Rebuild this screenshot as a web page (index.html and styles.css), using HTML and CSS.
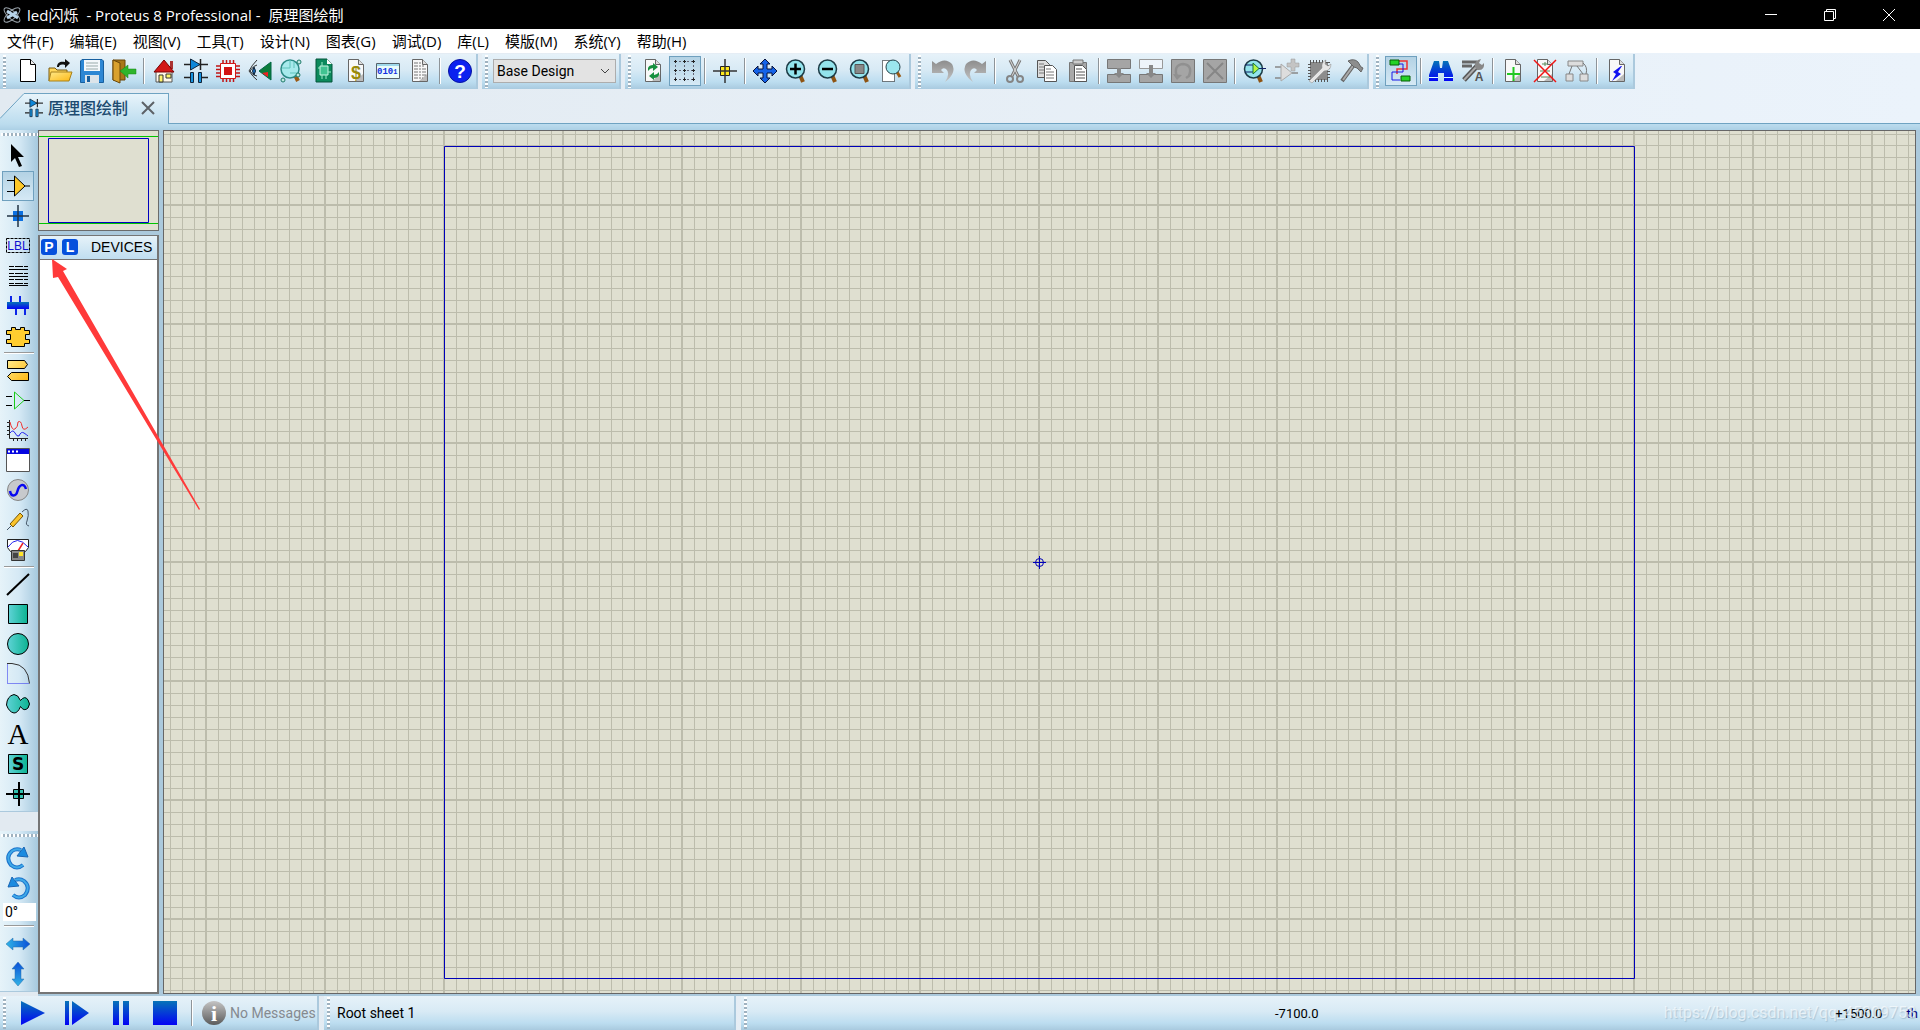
FILE: index.html
```html
<!DOCTYPE html>
<html lang="zh-CN">
<head>
<meta charset="utf-8">
<title>led闪烁 - Proteus 8 Professional - 原理图绘制</title>
<link rel="stylesheet" href="styles.css">
</head>
<body>
<header class="titlebar">
  <svg class="app-icon" viewBox="0 0 18 18"><g fill="none" stroke="#9aa3ab"><ellipse cx="9" cy="9" rx="10" ry="4" transform="rotate(42 9 9)"/><ellipse cx="9" cy="9" rx="10" ry="4" transform="rotate(-42 9 9)"/></g><path d="M4 5l11 7M4 12l10-6" stroke="#b8d4ea" stroke-width="3"/></svg>
  <div class="title"><span>led闪烁</span><span>- Proteus 8 Professional -</span><span>原理图绘制</span></div>
  <div class="window-buttons">
    <button aria-label="Minimize"><svg viewBox="0 0 14 14"><path d="M1 6.500h12"/></svg></button>
    <button aria-label="Restore"><svg viewBox="0 0 14 14"><path d="M1.500 3.500h9v9h-9zM3.500 3.500v-2h9v9h-2"/></svg></button>
    <button aria-label="Close"><svg viewBox="0 0 14 14"><path d="M1 1l12 12M13 1L1 13"/></svg></button>
  </div>
</header>

<nav class="menubar">
  <button>文件(F)</button><button>编辑(E)</button><button>视图(V)</button><button>工具(T)</button><button>设计(N)</button><button>图表(G)</button><button>调试(D)</button><button>库(L)</button><button>模版(M)</button><button>系统(Y)</button><button>帮助(H)</button>
</nav>

<div class="toolbars">
  <div class="bar">
    <button aria-label="New"><svg viewBox="0 0 24 24"><path d="M4.500.500h10l5 5v17h-15z" fill="#fff" stroke="#000"/><path d="M14.500.500v5h5" fill="#eee" stroke="#000"/></svg></button>
    <button aria-label="Open"><svg viewBox="0 0 24 24"><path d="M1 22V9h6l2 2h10v3" fill="#ffd75a" stroke="#7a5a10"/><path d="M1 22l2-9h21l-3 9z" fill="url(#gold)" stroke="#a8811c"/><path d="M9 8c0-5 4-6 8-5V0l5 4-5 5V6c-4-1-6 0-6 2z" fill="#111"/></svg></button>
    <button aria-label="Save"><svg viewBox="0 0 24 24"><path d="M2 .500h20l1.500 1.500v21.500H.500V2z" fill="#2d87d4" stroke="#175f9f"/><path d="M4 1h16v11H4z" fill="#f4f8fb"/><path d="M6 4h12M6 7h12M6 10h12" stroke="#9aa"/><path d="M5 16h14v8H5z" fill="#dce4ea"/><path d="M7 17h3v6H7z" fill="#175f9f"/></svg></button>
    <button aria-label="Exit"><svg viewBox="0 0 24 24"><path d="M1 1h12v20H1z" fill="#a87719" stroke="#6a4708"/><path d="M1 1l7 3v20l-7-3z" fill="#d9a12e" stroke="#6a4708"/><path d="M8 12l8-6v4h8v5h-8v4z" fill="#2fb52c" stroke="#178616" stroke-width=".500"/></svg></button>
    <i class="sep"></i>
    <button aria-label="Home"><svg viewBox="0 0 24 24"><path d="M18 2h3v8h-3z" fill="#a33"/><path d="M4 12h16v11H4z" fill="#fff7e8" stroke="#555"/><path d="M2 13L12 1l10 12z" fill="#d31818" stroke="#700"/><path d="M7 16h4v7H7zM14 15h5v4h-5z" fill="#fff46b" stroke="#333"/></svg></button>
    <button aria-label="Schematic"><svg viewBox="0 0 24 24"><use href="#schematic"/></svg></button>
    <button aria-label="PCB"><svg viewBox="0 0 24 24"><path d="M7 1v22M10.500 1v22M14 1v22M17.500 1v22M0 7h24M0 10.500h24M0 14h24M0 17.500h24" stroke="#c01515" stroke-width="1.500"/><path d="M4.500 4.500h15v15h-15z" fill="#fff" stroke="#d31818"/><path d="M8 8h8v8H8z" fill="#d31414"/></svg></button>
    <button aria-label="3D viewer"><svg viewBox="0 0 24 24"><path d="M9 1Q4 6 1 12q4 6 8 9M2 12q4-6 7-6M2 12q3 5 7 5" fill="none" stroke="#333"/><path d="M6 8q-3 4 0 8 3-4 0-8z" fill="#1a6fc0" stroke="#123"/><path d="M23 3v18L11 12z" fill="#0b7d3c" stroke="#064"/><path d="M20 13v5l-6-4z" fill="#e22"/></svg></button>
    <button aria-label="Gerber viewer"><svg viewBox="0 0 24 24"><path d="M15 16l3 6" stroke="#9a5b16" stroke-width="4"/><circle cx="10" cy="10" r="9" fill="#a7eaec" stroke="#2c8a86" stroke-width="1.500"/><path d="M2 9h8V1M10 14h8M14 3v6" stroke="#5fc3bb" fill="none"/><g fill="#bfe9e0" stroke="#1e7a6a"><circle cx="3" cy="21" r="2"/><circle cx="18" cy="16" r="2"/><circle cx="19" cy="3" r="2"/></g></svg></button>
    <button aria-label="Design explorer"><svg viewBox="0 0 24 24"><path d="M4 0h11l5 5v18H4z" fill="#0c8a5c" stroke="#05543a"/><path d="M15 0v5h5" fill="#fff"/><path d="M8 7h8v9H8z" fill="#41c391" stroke="#c9f5e2"/><path d="M10 3v4M14 16v4M6 9h2M16 13h3M10 16v4" stroke="#9ef0cc"/></svg></button>
    <button aria-label="Bill of materials"><svg viewBox="0 0 24 24"><use href="#page"/><text x="12" y="20" class="ico-dollar">$</text></svg></button>
    <button aria-label="Source code"><svg viewBox="0 0 24 24"><path d="M.500 4.500h23v15H.500z" fill="#e9fbfb" stroke="#56626b"/><path d="M1 5h22v2H1z" fill="#9fd9ea"/><text x="1" y="15" class="ico-bits">010<tspan class="small">1</tspan></text></svg></button>
    <button aria-label="Notes"><svg viewBox="0 0 24 24"><use href="#page"/><path d="M6 4h7M6 7h10M6 10h12M6 13h12M6 16h12M6 19h9" stroke="#777" stroke-dasharray="4 1 2 1"/></svg></button>
    <i class="sep"></i>
    <button aria-label="Help"><svg viewBox="0 0 24 24"><circle cx="12" cy="12" r="11.500" fill="#0b21ef" stroke="#0713a0"/><text x="12" y="19" class="ico-help">?</text></svg></button>
  </div>

  <div class="bar combo-bar">
    <select class="combo" aria-label="Design variant"><option>Base Design</option></select>
  </div>

  <div class="bar">
    <button aria-label="Redraw"><svg viewBox="0 0 24 24"><use href="#page"/><path d="M7 12V9q1-3 5-3V4l5 4-5 4V9q-3 0-5 3zM18 13v3q-1 3-5 3v2l-5-4 5-4v3q3 0 5-3z" fill="#16903e"/></svg></button>
    <button class="pressed" aria-label="Toggle grid"><svg viewBox="0 0 24 24"><path d="M2 2.500h20M2 11.500h20M2 20.500h20M2.500 2v20M11.500 2v20M20.500 2v20" stroke="#667" stroke-dasharray="2 2"/><path d="M1 2.500h3M10 2.500h3M19 2.500h3M1 11.500h3M10 11.500h3M19 11.500h3M1 20.500h3M10 20.500h3M19 20.500h3M2.500 1v3M11.500 1v3M20.500 1v3M2.500 10v3M11.500 10v3M20.500 10v3M2.500 19v3M11.500 19v3M20.500 19v3" stroke="#222"/></svg></button>
    <i class="sep"></i>
    <button aria-label="Origin"><svg viewBox="0 0 24 24"><path d="M7.500 7.500h9v9h-9z" fill="#ffe91c" stroke="#222"/><path d="M0 12h24M12 0v24" stroke="#333" stroke-width="1.500"/></svg></button>
    <i class="sep"></i>
    <button aria-label="Pan"><svg viewBox="0 0 24 24"><path d="M12 0l5 5h-3v5h5V7l5 5-5 5v-3h-5v5h3l-5 5-5-5h3v-5H5v3l-5-5 5-5v3h5V5H7z" fill="#1563e8" stroke="#07123d"/></svg></button>
    <button aria-label="Zoom in"><svg viewBox="0 0 24 24"><use href="#lens"/><path d="M5 10h11M10.500 4.500v11" stroke="#000" stroke-width="2.500"/></svg></button>
    <button aria-label="Zoom out"><svg viewBox="0 0 24 24"><use href="#lens"/><path d="M5 10h11" stroke="#000" stroke-width="2.500"/></svg></button>
    <button aria-label="Zoom all"><svg viewBox="0 0 24 24"><use href="#lens"/><path d="M6 5.500h9v9H6z" fill="#888" stroke="#555"/></svg></button>
    <button aria-label="Zoom area"><svg viewBox="0 0 24 24"><path d="M1.500 1.500h12v21h-12z" fill="#fff" stroke="#000" stroke-dasharray="1 1"/><path d="M16 13l3 5" stroke="#9a5b16" stroke-width="3"/><circle cx="12" cy="8" r="7" fill="#9be6ee" stroke="#26444c"/></svg></button>
  </div>

  <div class="bar">
    <button aria-label="Undo"><svg viewBox="0 0 24 24"><use href="#undo"/></svg></button>
    <button aria-label="Redo"><svg viewBox="0 0 24 24"><use href="#undo" transform="matrix(-1 0 0 1 24 0)"/></svg></button>
    <i class="sep"></i>
    <button aria-label="Cut"><svg viewBox="0 0 24 24"><path d="M7 1l8 16M17 1L9 17" stroke="#777" stroke-width="3"/><path d="M7 1l8 16M17 1L9 17" stroke="#ddd"/><g fill="none" stroke="#858585" stroke-width="2"><circle cx="7" cy="20" r="3"/><circle cx="17" cy="20" r="3"/></g></svg></button>
    <button aria-label="Copy"><svg viewBox="0 0 24 24"><path d="M2.500 1.500h8l4 4v13h-12z" fill="#ddd" stroke="#555"/><path d="M4 5h5M4 8h5M4 11h5M4 14h5" stroke="#777"/><path d="M9.500 6.500h8l4 4v12h-12z" fill="#fff" stroke="#555"/><path d="M11 10h5M11 13h8M11 16h8M11 19h8" stroke="#777"/></svg></button>
    <button aria-label="Paste"><svg viewBox="0 0 24 24"><path d="M2.500 3.500h17v19h-17z" fill="#a9a9a9" stroke="#777"/><path d="M6 1h10v4H6z" fill="#ccc" stroke="#777"/><path d="M7.500 6.500h8l4 4v12h-12z" fill="#fff" stroke="#555"/><path d="M9 10h6M9 13h9M9 16h9M9 19h9" stroke="#555"/></svg></button>
    <i class="sep"></i>
    <button aria-label="Block copy"><svg viewBox="0 0 24 24"><path d="M.500.500h23v9H.500zM.500 15.500h23v8H.500z" fill="#a5a5a5" stroke="#777"/><path d="M10 9h4v5h3l-5 5-5-5h3z" fill="#888"/></svg></button>
    <button aria-label="Block move"><svg viewBox="0 0 24 24"><path d="M.500.500h23v9H.500z" fill="#eef4fa" stroke="#999"/><path d="M.500 15.500h23v8H.500z" fill="#a5a5a5" stroke="#777"/><path d="M10 6h4v8h3l-5 5-5-5h3z" fill="#888"/></svg></button>
    <button aria-label="Block rotate"><svg viewBox="0 0 24 24"><path d="M.500.500h23v23H.500z" fill="#a5a5a5" stroke="#777"/><path d="M6 18q-4-12 6-13 10 1 6 12l-3 2" fill="none" stroke="#909090" stroke-width="2.500"/><path d="M2 15l4 6 5-5z" fill="#909090"/></svg></button>
    <button aria-label="Block delete"><svg viewBox="0 0 24 24"><path d="M.500.500h23v23H.500z" fill="#a5a5a5" stroke="#777"/><path d="M4 4l16 16M20 4L4 20" stroke="#868686" stroke-width="2"/></svg></button>
    <i class="sep"></i>
    <button aria-label="Pick parts"><svg viewBox="0 0 24 24"><use href="#lens"/><path d="M2 6h8M2 13h8M16 9.500h7" stroke="#126"/><path d="M10 4v11l6-5.500z" fill="#b6f542" stroke="#14763a"/></svg></button>
    <button aria-label="Make device"><svg viewBox="0 0 24 24"><path d="M0 8h6M0 19h6M17 14h6" stroke="#888" stroke-width="1.500"/><path d="M6 5v17l11-8z" fill="#ddd" stroke="#aaa"/><path d="M16 0h4v4h4v4h-4v4h-4V8h-4V4h4z" fill="#c4c4c4" stroke="#999" stroke-width=".500"/></svg></button>
    <button aria-label="Packaging tool"><svg viewBox="0 0 24 24"><path d="M3 3h18v18H3z" fill="#868686" stroke="#555" stroke-width="4" stroke-dasharray="1 2"/><path d="M4 4h16v16H4z" fill="#8d8d8d"/><path d="M2 22L15 9q-1-6 4-8l-1 4 3 2 3-2q0 7-7 7L5 24z" fill="#e6e6e6" stroke="#888" stroke-width=".500"/></svg></button>
    <button aria-label="Decompose"><svg viewBox="0 0 24 24"><path d="M3 22L14 7" stroke="#666" stroke-width="4"/><path d="M4 21L14 7" stroke="#aaa" stroke-width="2"/><path d="M9 2q6-3 10 1l3 5 2 1-2 4-4-4-3-1-3-3z" fill="#8d8d8d" stroke="#666"/></svg></button>
  </div>

  <div class="bar">
    <button class="pressed" aria-label="Wire autorouter"><svg viewBox="0 0 24 24"><path d="M9 2h9v8H8v5" fill="none" stroke="#f03030" stroke-width="1.500"/><path d="M10 5h4v8H3v8h8" fill="none" stroke="#1818e8"/><path d="M1 1h9v5H1zM12 17h9v5h-9z" fill="#26d326" stroke="#075d07"/></svg></button>
    <i class="sep"></i>
    <button aria-label="Search"><svg viewBox="0 0 24 24"><path d="M5 2h5l1 7h2l1-7h5l5 14v6h-9v-8H9v8H0v-6z" fill="url(#blue)"/><path d="M0 18.500h9M15 18.500h9" stroke="#dff"/></svg></button>
    <button aria-label="Property assignment"><svg viewBox="0 0 24 24"><path d="M1 3h15M1 7h10" stroke="#666" stroke-width="3"/><path d="M3 21L17 6" stroke="#555" stroke-width="5"/><path d="M3 21L17 6" stroke="#aaa" stroke-width="2"/><path d="M14 8q-1-7 6-8l-2 4 3 2 2-2q1 8-7 7z" fill="#888"/><text x="18" y="22" class="ico-prop">A</text></svg></button>
    <i class="sep"></i>
    <button aria-label="New sheet"><svg viewBox="0 0 24 24"><use href="#page"/><path d="M6 15h13M12.500 8v14" stroke="#22c822" stroke-width="2"/></svg></button>
    <button aria-label="Remove sheet"><svg viewBox="0 0 24 24"><use href="#page"/><path d="M9 5h6M12 3v4M7 12h10M8 18h9" stroke="#5a8a5a"/><path d="M1 1l22 22M23 1L1 23" stroke="#f01414" stroke-width="1.500"/></svg></button>
    <button aria-label="Exit to parent"><svg viewBox="0 0 24 24"><path d="M3 2h15v5H3zM1 15h7v7H1zM15 15h8v7h-8z" fill="#ddd" stroke="#888"/><path d="M7 7l-3 8M12 7l6 8M18 4q5 4 3 11" fill="none" stroke="#777"/></svg></button>
    <i class="sep"></i>
    <button aria-label="Electrical rules"><svg viewBox="0 0 24 24"><use href="#page"/><path d="M16 7l-8 6 3 2-4 7 9-7-3-2 4-6z" fill="#1212f0"/></svg></button>
  </div>
</div>

<div class="tabstrip">
  <div class="tab">
    <svg class="tab-edge" viewBox="0 0 24 31"><path d="M0 25L24 0v31H0z" fill="url(#tabfill)"/><path d="M0 25.500L24 .500" stroke="#6fa3c2"/></svg>
    <div class="tab-body">
      <svg class="tab-icon" viewBox="0 0 24 24"><use href="#schematic"/></svg>
      <span>原理图绘制</span>
      <button aria-label="Close tab"><svg viewBox="0 0 14 14"><path d="M1 1l12 12M13 1L1 13" stroke="#5d6267" stroke-width="2"/></svg></button>
    </div>
  </div>
</div>

<main class="workspace">
  <aside class="tools">
    <div class="toolgroup">
      <button aria-label="Selection"><svg viewBox="0 0 24 24"><path d="M5 0v18l4-4 4 9 3-1-4-9h6z" fill="#000"/></svg></button>
      <button class="pressed" aria-label="Component"><svg viewBox="0 0 24 24"><path d="M1 6.500h7M1 17.500h7M19 12h5" stroke="#000"/><path d="M8.500 2v20L19 12z" fill="#ffc928" stroke="#000"/></svg></button>
      <button aria-label="Junction"><svg viewBox="0 0 24 24"><path d="M7 7h10v10H7z" fill="#0b6fe0"/><path d="M1 12h22M12 1v22" stroke="#234" stroke-width="1.500"/></svg></button>
      <button aria-label="Wire label"><svg viewBox="0 0 24 24"><path d="M.500 4.500h23v14H.500z" fill="none" stroke="#000" stroke-dasharray="3 1"/><text x="12" y="16" class="ico-lbl">LBL</text></svg></button>
      <button aria-label="Text script"><svg viewBox="0 0 24 24"><path d="M3 2.500h19M3 9.500h19M3 15.500h19M3 19.500h19" stroke="#000" stroke-dasharray="5 1 8 1"/><path d="M3 5.500h19M3 12.500h19M3 21.500h19" stroke="#000"/></svg></button>
      <button aria-label="Bus"><svg viewBox="0 0 24 24"><path d="M5 2v8M14 2v8M10 14v7M19 14v7" stroke="#0b25e8" stroke-width="2"/><path d="M1 8h22v7H1z" fill="url(#blue)"/></svg></button>
      <button aria-label="Subcircuit"><svg viewBox="0 0 24 24"><path d="M5.500 3.500h4v2h5v-2h4v3h5v4h-4v5h4v4h-5v3h-13v-3h-5v-4h4v-5h-4v-4h5z" fill="#ffcd30" stroke="#000"/></svg></button>
      <i class="sep"></i>
      <button aria-label="Terminals"><svg viewBox="0 0 24 24"><path d="M1.500 2.500h17l3 4-3 4h-17zM22.500 14.500h-17l-4 4 4 4h17z" fill="url(#gold)" stroke="#000"/></svg></button>
      <button aria-label="Device pins"><svg viewBox="0 0 24 24"><path d="M0 8.500h6M0 17.500h6M18 12.500h6" stroke="#000"/><path d="M8.500 4v17L18 12.500z" fill="none" stroke="#1bcb1b"/></svg></button>
      <button aria-label="Graph"><svg viewBox="0 0 24 24"><path d="M3.500 2v18.500H22M1 4.500h3M1 8.500h3M1 12.500h3M1 16.500h3M7.500 20v3M11.500 20v3M15.500 20v3M19.500 20v3" stroke="#222" fill="none"/><path d="M4 4q2 9 5 7t3-7q3-2 4 4t6 1" stroke="#ee3030" fill="none"/><path d="M4 15q3-4 5 0t4 3q2-5 5-3t4 3" stroke="#2222ee" fill="none"/></svg></button>
      <button aria-label="Active popup"><svg viewBox="0 0 24 24"><path d="M.500.500h23v23H.500z" fill="#fff" stroke="#555"/><path d="M1 1h22v5H1z" fill="#0505e0"/><path d="M2 3.500h10" stroke="#fff" stroke-width="2" stroke-dasharray="2 2"/></svg></button>
      <button aria-label="Generator"><svg viewBox="0 0 24 24"><circle cx="12" cy="12" r="10.500" fill="#c7c9cc" stroke="#858585"/><path d="M4 13c1 6 6 6 7.500 0S18 4 20 11" fill="none" stroke="#0909f0" stroke-width="2.500"/></svg></button>
      <button aria-label="Probe"><svg viewBox="0 0 24 24"><path d="M1 22l6-6M16 4q5-5 6-1t-1 10q-2 4 2 5" fill="none" stroke="#456"/><path d="M4 16L14 5l3 3L7 19z" fill="#f9c32b" stroke="#765400"/></svg></button>
      <button aria-label="Instruments"><svg viewBox="0 0 24 24"><path d="M1.500 1.500h21v8l-3 4h-15l-3-4z" fill="#fff" stroke="#222"/><path d="M2 9q9-13 20 0" stroke="#2222ee" fill="none"/><path d="M12 13l5-8" stroke="#e22" stroke-width="1.500"/><path d="M5.500 12.500h13v10h-13z" fill="#888" stroke="#333"/><path d="M13 14h4v4h-4z" fill="#ffe52b"/><path d="M7 15h5v5H7z" fill="#444"/></svg></button>
      <i class="sep"></i>
      <button aria-label="Line"><svg viewBox="0 0 24 24"><path d="M1 23L23 2" stroke="#000" stroke-width="2"/></svg></button>
      <button aria-label="Box"><svg viewBox="0 0 24 24"><path d="M2.500 2.500h19v19h-19z" fill="url(#teal)" stroke="#000"/></svg></button>
      <button aria-label="Circle"><svg viewBox="0 0 24 24"><circle cx="12" cy="12" r="10.500" fill="url(#teal)" stroke="#000"/></svg></button>
      <button aria-label="Arc"><svg viewBox="0 0 24 24"><path d="M1.500 1.500v20h22" fill="none" stroke="#2222ee" stroke-dasharray="1 1"/><path d="M1 1.500h5q16 1 17.500 20" fill="none" stroke="#333"/></svg></button>
      <button aria-label="Path"><svg viewBox="0 0 24 24"><path d="M8 2.500q4 0 6.500 6Q19 3 22 8q3 4 0 8-4 4-7.500-1.500Q12 21 8 21q-5-1-7.500-8Q1 4 8 2.500z" fill="url(#teal)" stroke="#000"/></svg></button>
      <button aria-label="Text"><svg viewBox="0 0 24 24"><text x="12" y="22" class="ico-text">A</text></svg></button>
      <button aria-label="Symbol"><svg viewBox="0 0 24 24"><path d="M2.500 2.500h19v19h-19z" fill="url(#teal)" stroke="#000"/><text x="12" y="18" class="ico-symbol">S</text></svg></button>
      <button aria-label="Marker"><svg viewBox="0 0 24 24"><path d="M7.500 7.500h10v9h-10z" fill="#32bfae" stroke="#000"/><path d="M0 12h24M13 0v24" stroke="#000" stroke-width="2"/></svg></button>
    </div>
    <div class="toolgroup rotate-group">
      <button aria-label="Rotate clockwise"><svg viewBox="0 0 24 24"><use href="#rotate"/></svg></button>
      <button aria-label="Rotate anticlockwise"><svg viewBox="0 0 24 24"><use href="#rotate" transform="matrix(-1 0 0 1 24 0)"/></svg></button>
      <input class="angle" aria-label="Rotation angle" value="0°">
      <i class="sep"></i>
      <button aria-label="Mirror horizontally"><svg viewBox="0 0 24 24"><use href="#mirror"/></svg></button>
      <button aria-label="Mirror vertically"><svg viewBox="0 0 24 24"><use href="#mirror" transform="rotate(-90 12 12)"/></svg></button>
    </div>
  </aside>

  <section class="sidepanel">
    <svg class="overview" viewBox="0 0 119 99"><path d="M0 5.500h119M0 92.500h119" stroke="#00c400"/><path d="M9.500 7.500h100v84h-100z" fill="none" stroke="#0000c0"/></svg>
    <div class="devices">
      <div class="devices-head"><button aria-label="Pick devices">P</button><button aria-label="Library manager">L</button><span>DEVICES</span></div>
      <div class="devices-list"></div>
    </div>
  </section>

  <section class="canvas">
    <svg class="sheet">
      <defs>
        <linearGradient id="gold" x2="1" y2="1"><stop stop-color="#ffe98a"/><stop offset="1" stop-color="#fdb813"/></linearGradient>
        <linearGradient id="blue" x2="0" y2="1"><stop stop-color="#0673b8"/><stop offset="1" stop-color="#0303f5"/></linearGradient>
        <linearGradient id="sky" x2="1"><stop stop-color="#31b4e6"/><stop offset="1" stop-color="#0a4fd8"/></linearGradient>
        <linearGradient id="teal"><stop stop-color="#5fd3d6"/><stop offset="1" stop-color="#0cb392"/></linearGradient>
        <linearGradient id="grey" x2="0" y2="1"><stop stop-color="#8d8d8d"/><stop offset="1" stop-color="#c4c4c4"/></linearGradient>
        <linearGradient id="info" x2="0" y2="1"><stop stop-color="#c4c4c4"/><stop offset="1" stop-color="#5b5b5b"/></linearGradient>
        <linearGradient id="tabfill" x2="0" y2="1"><stop stop-color="#e8f4fb"/><stop offset="1" stop-color="#bbdcee"/></linearGradient>
        <g id="schematic"><path d="M0 5.500h24" stroke="#222" stroke-width="1.500"/><path d="M6.500 0v11L16 5.500z" fill="#0d86d8" stroke="#10243a"/><path d="M16.500 0v11" stroke="#222" stroke-width="1.500"/><path d="M0 18.500h6M18 18.500h6" stroke="#222" stroke-width="1.500"/><path d="M6.500 13.500h3v10h-3zM14.500 13.500h3v10h-3z" fill="#1693df" stroke="#10243a"/></g>
        <g id="page"><path d="M4.500.500h10l5 5v17h-15z" fill="#f8f8f8" stroke="#666"/><path d="M19 15v7h-8z" fill="#bbb"/><path d="M14.500.500v5h5" fill="#ddd" stroke="#666"/></g>
        <g id="lens"><path d="M15 16l3 7" stroke="#8e5312" stroke-width="4"/><circle cx="10.500" cy="10" r="9" fill="#93e3ec" stroke="#1d3b46" stroke-width="1.500"/></g>
        <g id="undo"><path d="M1 2l4 3Q14-2 21 5q5 9-7 18 6-9 1-13-3-2-5 1l3 3H1z" fill="url(#grey)"/></g>
        <g id="rotate"><path d="M17 19q-6 5-12 0-6-8 1-14 4-3 9-1" fill="none" stroke="#1c74cc" stroke-width="4"/><path d="M17 19q-6 5-12 0-6-8 1-14 4-3 9-1" fill="none" stroke="#3fa9e8" stroke-width="2"/><path d="M18 1l4 10-11-1z" fill="#1b8be0" stroke="#1a66b4"/></g>
        <g id="mirror"><path d="M0 12l7-6v3h10V6l7 6-7 6v-3H7v3z" fill="url(#sky)" stroke="#2a6ea8" stroke-width=".500"/></g>
        <pattern id="grid" x="42" y="74" width="119" height="119" patternUnits="userSpaceOnUse">
          <path d="M12.500 0v119M24.500 0v119M36.500 0v119M48.500 0v119M59.500 0v119M71.500 0v119M83.500 0v119M95.500 0v119M107.500 0v119M0 12.500h119M0 24.500h119M0 36.500h119M0 48.500h119M0 59.500h119M0 71.500h119M0 83.500h119M0 95.500h119M0 107.500h119" stroke="#bcbcac"/>
          <path d="M.500 0v119M118.500 0v119M0 .500h119M0 118.500h119" stroke="#bcbcac"/>
        </pattern>
      </defs>
      <rect width="100%" height="100%" fill="url(#grid)"/>
      <path d="M280.500 15.500h1190v832h-1190z" fill="none" stroke="#0000b8"/>
      <g fill="none" stroke="#0000b8"><circle cx="875.500" cy="431.500" r="4"/><path d="M869 431.500h13M875.500 425v13"/></g>
    </svg>
  </section>

  <svg class="pointer" viewBox="0 0 150 252"><path d="M0 0l15 10-4 2 137 238-1 1L6 18l-5 1z" fill="#ff3a3a"/></svg>
</main>

<footer class="statusbar">
  <div class="bar sim">
    <button aria-label="Run"><svg viewBox="0 0 24 24"><path d="M0 0l24 12L0 24z" fill="url(#blue)"/></svg></button>
    <button aria-label="Step"><svg viewBox="0 0 24 24"><path d="M0 0h4v24H0zM7 0l17 12L7 24z" fill="url(#blue)"/></svg></button>
    <button aria-label="Pause"><svg viewBox="0 0 24 24"><path d="M4 0h6v24H4zM14 0h6v24h-6z" fill="url(#blue)"/></svg></button>
    <button aria-label="Stop"><svg viewBox="0 0 24 24"><path d="M0 0h24v24H0z" fill="url(#blue)"/></svg></button>
    <i class="sep"></i>
    <svg class="info" viewBox="0 0 24 24"><circle cx="12" cy="12" r="12" fill="url(#info)"/><text x="12" y="20" class="ico-info">i</text></svg>
    <span class="messages">No Messages</span>
  </div>
  <div class="bar sheet-name">Root sheet 1</div>
  <div class="bar coords"><span>-7100.0</span><span class="coord-y">+1500.0</span><span class="unit">th</span></div>
  <div class="watermark">https://blog.csdn.net/qq_45309753</div>
</footer>
</body>
</html>
```
FILE: styles.css
```css
* { box-sizing: border-box; }

body {
  margin: 0;
  min-height: 100vh;
  display: flex;
  flex-direction: column;
  overflow: hidden;
  background: linear-gradient(90deg, #e2eaf1, #ebf3fb);
  font-family: "Noto Sans", "Noto Sans CJK SC", sans-serif;
  font-size: 14px;
  color: #000;
}

button {
  display: flex;
  align-items: center;
  justify-content: center;
  padding: 0;
  border: 0;
  background: none;
  font: inherit;
  color: inherit;
}

svg { display: block; flex: none; }
button svg { overflow: visible; }

/* Title bar */
.titlebar {
  display: flex;
  align-items: center;
  height: 29px;
  padding: 0 2px 0 3px;
  background: #000;
  color: #fff;
}
.app-icon { width: 18px; height: 18px; margin-right: 6px; }
.title {
  display: flex;
  gap: 8px;
  font-family: "Open Sans", "Noto Sans CJK SC", sans-serif;
  font-size: 15px;
  line-height: 28px;
  white-space: nowrap;
}
.window-buttons { display: flex; margin-left: auto; }
.window-buttons button { width: 59px; height: 29px; }
.window-buttons svg { width: 14px; height: 14px; fill: none; stroke: #fff; }

/* Menu */
.menubar {
  display: flex;
  gap: 16px;
  height: 24px;
  padding-left: 7px;
  background: #fff;
}
.menubar button { font-family: "Open Sans", "Noto Sans CJK SC", sans-serif; font-size: 15px; line-height: 24px; white-space: nowrap; }

/* Toolbars */
.toolbars { display: flex; gap: 4px; padding-top: 1px; }
.bar {
  position: relative;
  display: flex;
  height: 35px;
  padding: 2px 0 0 12px;
  border-right: 2px solid #abc9dd;
  background: linear-gradient(#e6f2f9, #d8eaf5 45%, #bcddf0 80%, #a9cadf);
}
.bar::before {
  content: "";
  position: absolute;
  left: 3px;
  top: 1px;
  bottom: 1px;
  width: 3px;
  background: repeating-linear-gradient(#fff 0 2px, #9fb2c0 2px 4px);
}
.bar button { width: 32px; height: 30px; }
.bar button svg { width: 24px; height: 24px; }
.pressed {
  border: 1px solid #6fa0be;
  background: linear-gradient(#b3d2e4, #d5e9f5);
}
.bar .sep {
  width: 2px;
  height: 26px;
  margin: 2px 3px;
  border-left: 1px solid #8e9499;
  background: #fff;
}
.combo-bar { padding: 5px 3px 0 11px; }
.combo {
  width: 123px;
  height: 24px;
  padding: 0 3px;
  border: 1px solid #adadad;
  border-radius: 0;
  appearance: none;
  background: #e3e3e3 url("data:image/svg+xml,%3Csvg xmlns='http://www.w3.org/2000/svg' width='10' height='6'%3E%3Cpath d='M1 1l4 4 4-4' fill='none' stroke='%23444'/%3E%3C/svg%3E") no-repeat right 5px center;
  font-family: Roboto, sans-serif;
  font-size: 14px;
  color: #000;
}

/* Document tabs */
.tabstrip {
  display: flex;
  align-items: flex-end;
  height: 41px;
  padding-top: 4px;
  background: linear-gradient(#bcdcee, #acd0e5) bottom / 100% 6px no-repeat, linear-gradient(#6fa3c2, #6fa3c2) 0 34px / 100% 1px no-repeat;
}
.tab { display: flex; height: 31px; margin-bottom: 6px; }
.tab-edge { width: 24px; height: 31px; }
.tab-body {
  display: flex;
  align-items: center;
  width: 145px;
  padding-bottom: 2px;
  border-top: 1px solid #6fa3c2;
  border-right: 1px solid #6fa3c2;
  background: linear-gradient(#e8f4fb, #bbdcee);
  color: #1d4b70;
  font-size: 16px;
  font-weight: 500;
  line-height: 24px;
  white-space: nowrap;
}
.tab-icon { width: 18px; height: 20px; margin: 0 5px 0 1px; }
.tab-body button { width: 40px; height: 24px; }
.tab-body button svg { width: 14px; height: 14px; }

/* Workspace */
.workspace {
  position: relative;
  flex: 1;
  display: flex;
  background: #abc9dc;
}
.tools {
  width: 38px;
  background: #e2eaf1;
  display: flex;
  flex-direction: column;
  gap: 19px;
}
.toolgroup {
  position: relative;
  display: flex;
  flex-direction: column;
  padding: 11px 4px 2px 2px;
  border-bottom: 1px solid #abc9dd;
  background: linear-gradient(90deg, #e6f3f9, #d5e9f5 50%, #a6c9de);
}
.toolgroup::before {
  content: "";
  position: absolute;
  left: 1px;
  right: 0;
  top: 3px;
  height: 3px;
  background: repeating-linear-gradient(90deg, #fff 0 2px, #9fb2c0 2px 4px);
}
.toolgroup button { width: 32px; height: 30px; }
.toolgroup svg { width: 24px; height: 24px; }
.toolgroup .sep {
  height: 2px;
  margin: 1px 0 1px 2px;
  border-top: 1px solid #999;
  background: #fff;
}
.rotate-group { padding-top: 12px; }
.rotate-group .sep { margin: 4px 0 2px 2px; }
.angle {
  width: 33px;
  height: 18px;
  margin-left: 1px;
  padding: 0 2px;
  border: 0;
  background: #fff;
  font-family: Roboto, sans-serif;
  font-size: 14px;
}

.sidepanel {
  display: flex;
  flex-direction: column;
  gap: 4px;
  width: 121px;
  margin-bottom: 2px;
}
.overview { width: 121px; height: 101px; border: 1px solid #6b6b6b; background: #dfdfd0; }
.devices {
  flex: 1;
  display: flex;
  flex-direction: column;
  border: 2px solid #757575;
  border-top-width: 1px;
  background: #fff;
}
.devices-head {
  display: flex;
  align-items: center;
  gap: 5px;
  height: 24px;
  padding: 0 0 2px 1px;
  border-bottom: 1px solid #757575;
  background: linear-gradient(#e6f2f9, #c0def0);
  font-family: "Liberation Sans", sans-serif;
  font-size: 14px;
}
.devices-head button {
  width: 16px;
  height: 16px;
  border-radius: 3px;
  background: #0550dc;
  color: #fff;
  font-weight: 700;
  line-height: 16px;
}
.devices-head span { margin-left: 8px; }

.canvas {
  flex: 1;
  display: flex;
  margin: 0 4px 2px 4px;
  border: 1px solid #666;
  background: #dfdfd0;
}
.sheet { flex: 1; width: 100%; min-width: 0; height: auto; }
.pointer { position: absolute; left: 52px; top: 129px; width: 150px; height: 252px; }

/* Status bar */
.statusbar { position: relative; display: flex; gap: 5px; }
.statusbar .bar { height: 34px; align-items: center; padding-top: 0; font-family: Roboto, sans-serif; font-size: 14px; white-space: nowrap; }
.statusbar .sim { width: 319px; padding-left: 17px; }
.sim button { margin-right: 12px; }
.statusbar .sim .sep { margin: 0 9px 0 -2px; }
.info { width: 24px; height: 24px; margin-right: 4px; }
.messages { color: #858a90; }
.statusbar .sheet-name { width: 412px; padding-left: 13px; }
.statusbar .coords { flex: 1; padding: 0 2px 0 534px; border-right: 0; font-size: 13px; }
.coord-y { margin-left: auto; }
.unit { margin-left: 24px; color: #000080; }
.watermark {
  position: absolute;
  right: 4px;
  top: 5px;
  font-family: Roboto, sans-serif;
  font-size: 16px;
  line-height: 24px;
  color: rgba(255, 255, 255, .6);
  text-shadow: 1px 1px 1px rgba(120, 150, 170, .4);
}

/* Lettering inside icons */
.ico-dollar { font: 700 18px "Liberation Sans", sans-serif; fill: #9a8a0a; text-anchor: middle; }
.ico-bits { font: 700 9px "Liberation Mono", monospace; fill: #1030e0; }
.ico-bits .small { font-size: 7px; }
.ico-help { font: 700 19px "Liberation Sans", sans-serif; fill: #fff; text-anchor: middle; }
.ico-prop { font: 700 12px "Liberation Sans", sans-serif; fill: #555; text-anchor: middle; }
.ico-lbl { font: 12px "Liberation Sans", sans-serif; fill: #1010d0; text-anchor: middle; }
.ico-text { font: 29px "Liberation Serif", serif; fill: #000; text-anchor: middle; }
.ico-symbol { font: 700 17px "DejaVu Sans", sans-serif; fill: #000; text-anchor: middle; }
.ico-info { font: 700 22px "Liberation Serif", serif; fill: #fff; text-anchor: middle; }
```
